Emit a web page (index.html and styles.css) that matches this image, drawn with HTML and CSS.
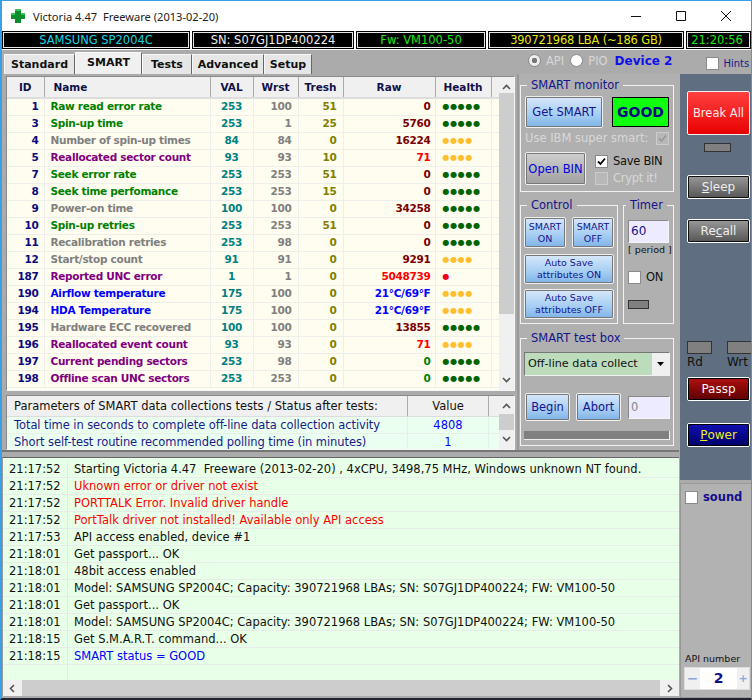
FILE: index.html
```html
<!DOCTYPE html>
<html lang="en">
<head>
<meta charset="utf-8">
<title>Victoria 4.47</title>
<link rel="stylesheet" href="styles.css">
</head>
<body>
<div class="window">
  <header class="titlebar">
    <svg class="appicon" width="16" height="16" viewBox="0 0 16 16"><path d="M5 1h6v4h4v6h-4v4H5v-4H1V5h4z" fill="#0b8f2c"/><path d="M5 1h6v2H5zM1 5h4v2H1zM11 5h4v2h-4z" fill="#35c552"/></svg>
    <span class="title-text">Victoria 4.47  Freeware (2013-02-20)</span>
    <div class="winctl">
      <svg width="12" height="12" viewBox="0 0 12 12"><path d="M1 6.5h10" stroke="#111" fill="none"/></svg>
      <svg width="12" height="12" viewBox="0 0 12 12"><path d="M1.5 1.5h9v9h-9z" stroke="#111" fill="none"/></svg>
      <svg width="12" height="12" viewBox="0 0 12 12"><path d="M1 1l10 10M11 1L1 11" stroke="#111" fill="none"/></svg>
    </div>
  </header>

  <div class="infobar">
    <div class="info cyan i-model">SAMSUNG SP2004C</div>
    <div class="info white i-sn">SN: S07GJ1DP400224</div>
    <div class="info green i-fw">Fw: VM100-50</div>
    <div class="info yellow i-lba">390721968 LBA (~186 GB)</div>
    <div class="info green i-time">21:20:56</div>
  </div>

  <div class="toolbar">
    <nav class="tabs">
      <span class="tab t-standard">Standard</span>
      <span class="tab active t-smart">SMART</span>
      <span class="tab t-tests">Tests</span>
      <span class="tab t-adv">Advanced</span>
      <span class="tab t-setup">Setup</span>
    </nav>
    <div class="modes">
      <span class="radio on"></span><span class="ghost mode-l">API</span>
      <span class="radio"></span><span class="ghost mode-l">PIO</span>
      <span class="device">Device 2</span>
    </div>
    <div class="hints"><span class="check"></span><span>Hints</span></div>
  </div>

  <div class="body">
    <div class="leftcol">
      <div class="upper">
        <div class="tables">
          <section class="smart-panel">
            <div class="smart-table">
              <table class="attrs">
                <colgroup><col class="c-id"><col class="c-name"><col class="c-val"><col class="c-wrst"><col class="c-tresh"><col class="c-raw"><col class="c-health"><col class="c-end"></colgroup>
                <thead><tr><th class="r">ID</th><th class="l nm">Name</th><th>VAL</th><th>Wrst</th><th>Tresh</th><th>Raw</th><th>Health</th><th></th></tr></thead>
                <tbody>
                  <tr><td class="id">1</td><td class="name g">Raw read error rate</td><td class="val">253</td><td class="wrst">100</td><td class="tresh">51</td><td class="raw">0</td><td class="h"><span class="dg">●●●●●</span></td><td></td></tr>
                  <tr><td class="id">3</td><td class="name g">Spin-up time</td><td class="val">253</td><td class="wrst">1</td><td class="tresh">25</td><td class="raw">5760</td><td class="h"><span class="dg">●●●●●</span></td><td></td></tr>
                  <tr><td class="id">4</td><td class="name n">Number of spin-up times</td><td class="val">84</td><td class="wrst">84</td><td class="tresh">0</td><td class="raw">16224</td><td class="h"><span class="dy">●●●●</span></td><td></td></tr>
                  <tr><td class="id">5</td><td class="name p">Reallocated sector count</td><td class="val">93</td><td class="wrst">93</td><td class="tresh">10</td><td class="raw hot">71</td><td class="h"><span class="dy">●●●●</span></td><td></td></tr>
                  <tr><td class="id">7</td><td class="name g">Seek error rate</td><td class="val">253</td><td class="wrst">253</td><td class="tresh">51</td><td class="raw">0</td><td class="h"><span class="dg">●●●●●</span></td><td></td></tr>
                  <tr><td class="id">8</td><td class="name g">Seek time perfomance</td><td class="val">253</td><td class="wrst">253</td><td class="tresh">15</td><td class="raw">0</td><td class="h"><span class="dg">●●●●●</span></td><td></td></tr>
                  <tr><td class="id">9</td><td class="name n">Power-on time</td><td class="val">100</td><td class="wrst">100</td><td class="tresh">0</td><td class="raw">34258</td><td class="h"><span class="dg">●●●●●</span></td><td></td></tr>
                  <tr><td class="id">10</td><td class="name g">Spin-up retries</td><td class="val">253</td><td class="wrst">253</td><td class="tresh">51</td><td class="raw">0</td><td class="h"><span class="dg">●●●●●</span></td><td></td></tr>
                  <tr><td class="id">11</td><td class="name n">Recalibration retries</td><td class="val">253</td><td class="wrst">98</td><td class="tresh">0</td><td class="raw">0</td><td class="h"><span class="dg">●●●●●</span></td><td></td></tr>
                  <tr><td class="id">12</td><td class="name n">Start/stop count</td><td class="val">91</td><td class="wrst">91</td><td class="tresh">0</td><td class="raw">9291</td><td class="h"><span class="dy">●●●●</span></td><td></td></tr>
                  <tr><td class="id">187</td><td class="name p">Reported UNC error</td><td class="val">1</td><td class="wrst">1</td><td class="tresh">0</td><td class="raw hot">5048739</td><td class="h"><span class="dr">●</span></td><td></td></tr>
                  <tr><td class="id">190</td><td class="name b">Airflow temperature</td><td class="val">175</td><td class="wrst">100</td><td class="tresh">0</td><td class="raw cool">21°C/69°F</td><td class="h"><span class="dy">●●●●</span></td><td></td></tr>
                  <tr><td class="id">194</td><td class="name b">HDA Temperature</td><td class="val">175</td><td class="wrst">100</td><td class="tresh">0</td><td class="raw cool">21°C/69°F</td><td class="h"><span class="dy">●●●●</span></td><td></td></tr>
                  <tr><td class="id">195</td><td class="name n">Hardware ECC recovered</td><td class="val">100</td><td class="wrst">100</td><td class="tresh">0</td><td class="raw">13855</td><td class="h"><span class="dg">●●●●●</span></td><td></td></tr>
                  <tr><td class="id">196</td><td class="name p">Reallocated event count</td><td class="val">93</td><td class="wrst">93</td><td class="tresh">0</td><td class="raw hot">71</td><td class="h"><span class="dy">●●●●</span></td><td></td></tr>
                  <tr><td class="id">197</td><td class="name p">Current pending sectors</td><td class="val">253</td><td class="wrst">98</td><td class="tresh">0</td><td class="raw grn">0</td><td class="h"><span class="dg">●●●●●</span></td><td></td></tr>
                  <tr><td class="id">198</td><td class="name p">Offline scan UNC sectors</td><td class="val">253</td><td class="wrst">253</td><td class="tresh">0</td><td class="raw grn">0</td><td class="h"><span class="dg">●●●●●</span></td><td></td></tr>
                </tbody>
              </table>
            </div>
            <div class="vscroll s-main">
              <svg class="arrow" width="9" height="6" viewBox="0 0 9 6"><path d="M1 5l3.5-3.5L8 5" stroke="#555" stroke-width="1.6" fill="none"/></svg>
              <div class="track"><div class="thumb"></div></div>
              <svg class="arrow" width="9" height="6" viewBox="0 0 9 6"><path d="M1 1l3.5 3.5L8 1" stroke="#555" stroke-width="1.6" fill="none"/></svg>
            </div>
          </section>
          <section class="params-panel">
            <div class="params-table">
              <div class="p-head"><span class="p-title">Parameters of SMART data collections tests / Status after tests:</span><span class="p-value">Value</span><span class="p-end"></span></div>
              <div class="p-row"><span class="p-title">Total time in seconds to complete off-line data collection activity</span><span class="p-value">4808</span></div>
              <div class="p-row"><span class="p-title">Short self-test routine recommended polling time (in minutes)</span><span class="p-value">1</span></div>
            </div>
            <div class="vscroll s-params">
              <svg class="arrow" width="9" height="6" viewBox="0 0 9 6"><path d="M1 5l3.5-3.5L8 5" stroke="#555" stroke-width="1.6" fill="none"/></svg>
              <div class="track"><div class="thumb"></div></div>
              <svg class="arrow" width="9" height="6" viewBox="0 0 9 6"><path d="M1 1l3.5 3.5L8 1" stroke="#555" stroke-width="1.6" fill="none"/></svg>
            </div>
          </section>
        </div>

        <aside class="controls">
          <fieldset class="group g-monitor">
            <legend>SMART monitor</legend>
            <div class="mon-top">
              <span class="btn blue get">Get SMART</span>
              <span class="good">GOOD</span>
            </div>
            <div class="ibm"><span class="ghost">Use IBM super smart:</span><span class="check dis"><svg width="11" height="11" viewBox="0 0 11 11"><path d="M2 5.5l2.5 2.5L9 2.5" stroke="#999" stroke-width="1.8" fill="none"/></svg></span></div>
            <div class="mon-bottom">
              <span class="btn gray-l openbin">Open BIN</span>
              <div class="checks">
                <label class="chk"><span class="check"><svg width="11" height="11" viewBox="0 0 11 11"><path d="M2 5.5l2.5 2.5L9 2.5" stroke="#000" stroke-width="1.8" fill="none"/></svg></span>Save BIN</label>
                <label class="chk ghost"><span class="check dis"></span>Crypt it!</label>
              </div>
            </div>
          </fieldset>
          <div class="ctl-row">
            <fieldset class="group g-control">
              <legend>Control</legend>
              <div class="two">
                <span class="btn blue small sq">SMART<br>ON</span>
                <span class="btn blue small sq">SMART<br>OFF</span>
              </div>
              <span class="btn blue small wide">Auto Save<br>attributes ON</span>
              <span class="btn blue small wide">Auto Save<br>attributes OFF</span>
            </fieldset>
            <fieldset class="group g-timer">
              <legend>Timer</legend>
              <div class="input timer-in">60</div>
              <div class="period">[ period ]</div>
              <label class="chk on-chk"><span class="check"></span>ON</label>
              <div class="led timer-led"></div>
            </fieldset>
          </div>
          <fieldset class="group g-test">
            <legend>SMART test box</legend>
            <div class="select"><span class="sel-text">Off-line data collect</span><span class="sel-btn"><svg width="7" height="4" viewBox="0 0 7 4"><path d="M0 0h7L3.5 4z" fill="#000"/></svg></span></div>
            <div class="test-row">
              <span class="btn blue begin">Begin</span>
              <span class="btn blue begin">Abort</span>
              <div class="input test-in">0</div>
            </div>
            <div class="progress"></div>
          </fieldset>
        </aside>
      </div>

      <section class="log">
        <div class="log-rows">
          <div class="l-row"><span class="l-t">21:17:52</span><span class="l-m">Starting Victoria 4.47  Freeware (2013-02-20) , 4xCPU, 3498,75 MHz, Windows unknown NT found.</span></div>
          <div class="l-row"><span class="l-t">21:17:52</span><span class="l-m err">Uknown error or driver not exist</span></div>
          <div class="l-row"><span class="l-t">21:17:52</span><span class="l-m err">PORTTALK Error. Invalid driver handle</span></div>
          <div class="l-row"><span class="l-t">21:17:52</span><span class="l-m err">PortTalk driver not installed! Available only API access</span></div>
          <div class="l-row"><span class="l-t">21:17:53</span><span class="l-m">API access enabled, device #1</span></div>
          <div class="l-row"><span class="l-t">21:18:01</span><span class="l-m">Get passport... OK</span></div>
          <div class="l-row"><span class="l-t">21:18:01</span><span class="l-m">48bit access enabled</span></div>
          <div class="l-row"><span class="l-t">21:18:01</span><span class="l-m">Model: SAMSUNG SP2004C; Capacity: 390721968 LBAs; SN: S07GJ1DP400224; FW: VM100-50</span></div>
          <div class="l-row"><span class="l-t">21:18:01</span><span class="l-m">Get passport... OK</span></div>
          <div class="l-row"><span class="l-t">21:18:01</span><span class="l-m">Model: SAMSUNG SP2004C; Capacity: 390721968 LBAs; SN: S07GJ1DP400224; FW: VM100-50</span></div>
          <div class="l-row"><span class="l-t">21:18:15</span><span class="l-m">Get S.M.A.R.T. command... OK</span></div>
          <div class="l-row"><span class="l-t">21:18:15</span><span class="l-m info-l">SMART status = GOOD</span></div>
          <div class="l-row"><span class="l-t"></span><span class="l-m"></span></div>
        </div>
        <div class="hscroll">
          <svg width="6" height="9" viewBox="0 0 6 9"><path d="M5 1L1.5 4.5 5 8" stroke="#555" stroke-width="1.6" fill="none"/></svg>
          <div class="h-track"></div>
          <svg width="6" height="9" viewBox="0 0 6 9"><path d="M1 1l3.5 3.5L1 8" stroke="#555" stroke-width="1.6" fill="none"/></svg>
        </div>
      </section>
    </div>

    <div class="rightcol">
      <div class="slate">
        <span class="btn breakall">Break All</span>
        <div class="led break-led"></div>
        <span class="btn dark sleep"><u>S</u>leep</span>
        <span class="btn dark recall">Re<u>c</u>all</span>
        <div class="rw">
          <div class="rw-item"><div class="led rw-led"></div><span>Rd</span></div>
          <div class="rw-item"><div class="led rw-led"></div><span>Wrt</span></div>
        </div>
        <span class="btn maroon">Passp</span>
        <span class="btn navy"><u>P</u>ower</span>
      </div>
      <div class="soundpanel">
        <label class="sound"><span class="check big"></span>sound</label>
        <div class="api">
          <div class="api-label">API number</div>
          <div class="spinner"><span class="spin-b">−</span><span class="spin-v">2</span><span class="spin-b plus">+</span></div>
        </div>
      </div>
    </div>
  </div>
</div>
</body>
</html>
```

FILE: styles.css
```css
* { box-sizing: border-box; }
html, body { margin: 0; padding: 0; }
body { width: 752px; height: 700px; overflow: hidden; font-family: "DejaVu Sans", sans-serif; font-size: 11px; }
.window { width: 752px; height: 700px; display: flex; flex-direction: column; background: #ababab; border: 1px solid #3aa0e6; border-left-width: 2px; border-bottom: 2px solid #223; overflow: hidden; }

.titlebar { height: 30px; flex: none; background: #fff; display: flex; align-items: center; padding-left: 8px; }
.appicon { margin-right: 7px; }
.title-text { font-family: "Noto Sans", sans-serif; font-size: 11.1px; white-space: pre; color: #222; }
.winctl { margin-left: auto; display: flex; gap: 33px; padding-right: 19px; }

.infobar { height: 19px; flex: none; display: flex; gap: 2px; background: #fff; padding-bottom: 1px; }
.info { background: #000; outline: 1px solid #e8e8e8; outline-offset: -2px; border: 1px solid #000; font-size: 11.5px; text-align: center; line-height: 16px; white-space: nowrap; }
.i-model { width: 188px; } .i-sn { width: 162px; } .i-fw { flex: none; width: 130px; } .i-lba { width: 196px; letter-spacing: -.2px; } .i-time { flex: 1; padding-right: 3px; }
.cyan { color: #19d3e6; } .white { color: #eee; } .green { color: #19e619; } .yellow { color: #e6e619; }

.toolbar { height: 24px; flex: none; display: flex; align-items: flex-end; background: #ababab; }
.tabs { display: flex; align-items: flex-end; padding-left: 2px; width: 510px; flex: none; }
.tab { height: 20px; background: #e6e6e6; border: 1px solid #f8f8f8; border-right-color: #666; border-bottom: 0; font-weight: bold; font-size: 11px; line-height: 19px; color: #111; text-align: center; }
.tab.active { height: 22px; background: #f0f0f0; line-height: 19px; color: #111; }
.t-standard { width: 71px; } .t-smart { width: 67px; } .t-tests { width: 50px; } .t-adv { width: 72px; } .t-setup { width: 48px; }
.modes { display: flex; align-items: center; align-self: flex-start; height: 17px; margin-top: 2px; margin-left: 16px; flex: none; }
.mode-l { font-size: 11.5px; margin: 0 6px 0 5px; }
.radio { width: 13px; height: 13px; border-radius: 50%; background: #fff; border: 1px solid #8a8a8a; position: relative; flex: none; }
.radio.on { background: radial-gradient(circle, #777 0 2.5px, #eee 3px); }
.ghost { color: #d8d8d8; }
.device { color: #1010e8; font-weight: bold; font-size: 12px; margin-left: 1px; white-space: nowrap; }
.hints { display: flex; align-items: center; align-self: flex-start; gap: 4px; margin-top: 7px; margin-left: 34px; color: #1a1a8c; white-space: nowrap; font-size: 10px; flex: none; }

.check { display: inline-flex; align-items: center; justify-content: center; width: 13px; height: 13px; background: #fff; border: 1px solid #8a8a8a; flex: none; }
.check.dis { background: #b8b8b8; border-color: #ccc; }

.body { flex: 1; display: flex; min-height: 0; }
.leftcol { width: 677px; flex: none; display: flex; flex-direction: column; }
.upper { height: 378px; display: flex; border-bottom: 2px solid #777; flex: none; }
.tables { width: 513px; flex: none; padding: 2px 0 0 4px; display: flex; flex-direction: column; gap: 4px; }
.smart-panel { height: 318px; display: flex; background: #fff; border: 1px solid #8a8a8a; border-right-color: #f5f5f5; border-bottom-color: #f5f5f5; }
.smart-table { flex: 1; overflow: hidden; background: #fffdf0; }
.attrs { border-collapse: collapse; table-layout: fixed; width: 100%; font-weight: bold; font-size: 10.5px; letter-spacing: -.3px; }
.c-id { width: 37px; } .c-name { width: 166px; } .c-val { width: 43px; } .c-wrst { width: 45px; } .c-tresh { width: 45px; } .c-raw { width: 92px; } .c-health { width: 56px; } .c-end { width: 8px; }
.attrs th { height: 21px; background: #f0f0f0; color: #10104a; border-right: 1px solid #aaa; border-bottom: 2px solid #ddd; padding: 0; font-size: 10.5px; letter-spacing: 0; }
.attrs th.l { text-align: left; padding-left: 9px; }
.attrs th.r { text-align: center; }
.attrs td { height: 17px; padding: 0 4px 0 0; border-right: 1px solid #eeeeea; border-bottom: 1px solid #eeeeea; text-align: right; white-space: nowrap; overflow: hidden; line-height: 15px; }
.attrs td.id { color: #0a0a80; padding-right: 5px; }
.attrs td.name { text-align: left; padding-left: 6px; }
.attrs td.val { color: #008080; text-align: center; padding: 0; }
.attrs td.wrst { color: #808080; padding-right: 6px; }
.attrs td.tresh { color: #808000; padding-right: 6px; }
.attrs td.raw { color: #7a0000; }
.g { color: #008000; } .n { color: #808080; } .p { color: #800080; } .b { color: #0000ff; }
.attrs td.hot { color: #ff0000; } .attrs td.cool { color: #0000ff; } .attrs td.grn { color: #008000; }
.attrs td.h { text-align: left; padding: 0 0 0 7px; font-size: 8px; letter-spacing: .7px; }
.dg { color: #006400; } .dy { color: #ffbf30; } .dr { color: #ee0020; }

.vscroll { width: 15px; flex: none; background: #f0f0f0; display: flex; flex-direction: column; align-items: center; justify-content: space-between; padding: 7px 0; }
.track { flex: 1; width: 100%; margin: 3px 0; }
.s-main .thumb { height: 221px; background: #cdcdcd; }
.s-params .thumb { height: 16px; margin-top: 2px; background: #cdcdcd; }

.params-panel { height: 55px; display: flex; background: #fff; border: 1px solid #8a8a8a; border-right-color: #f5f5f5; border-bottom-color: #f5f5f5; overflow: hidden; }
.params-table { flex: 1; background: #ebfff0; overflow: hidden; font-size: 11.5px; }
.p-head { height: 21px; display: flex; background: #f0f0f0; line-height: 20px; border-bottom: 1px solid #ddd; color: #111; }
.p-row { height: 17px; display: flex; line-height: 16px; color: #1a1a8c; border-bottom: 1px solid #e8f0e8; }
.p-title { width: 401px; padding-left: 7px; white-space: nowrap; overflow: hidden; border-right: 1px solid #aaa; flex: none; }
.p-row .p-title { border-right-color: #e4f0e4; letter-spacing: -.08px; }
.p-value { width: 81px; text-align: center; border-right: 1px solid #aaa; flex: none; }
.p-row .p-value { color: #0000ff; border-right-color: #e4f0e4; }

.controls { width: 163px; flex: none; margin-left: 2px; padding: 0 6px 0 1px; display: flex; flex-direction: column; background: #b0b0b0; border-left: 2px solid #999; }
.group { margin: 0; padding: 0 4px; border: 1px solid #f2f2f2; border-radius: 0; min-width: 0; background: #b0b0b0; }
.group legend { padding: 0 4px; color: #14148c; font-size: 11.5px; line-height: 14px; white-space: nowrap; }
.g-monitor { height: 114px; margin-top: 4px; padding-top: 4px; }
.g-monitor legend { margin-left: 2px; }
.g-control legend { margin-left: 3px; }
.g-timer legend { margin-left: -2px; }
.g-test legend { margin-left: 3px; }
.mon-top { display: flex; align-items: center; gap: 9px; }
.btn { display: flex; align-items: center; justify-content: center; text-align: center; flex: none; border: 1px solid #f0f0f0; outline: 1px solid #777; outline-offset: -2px; border-radius: 2px; white-space: nowrap; }
.btn.blue { background: linear-gradient(#d8e8fb, #a5cdf2 60%, #7fb3e8); color: #14148c; }
.get { width: 78px; height: 32px; font-size: 11.5px; }
.good { width: 58px; height: 30px; background: #10ff10; border: 1px solid #000; color: #0a0a80; font-weight: bold; font-size: 14px; text-align: center; line-height: 28px; }
.ibm { display: flex; align-items: center; justify-content: space-between; height: 20px; font-size: 11.5px; white-space: nowrap; }
.mon-bottom { display: flex; gap: 9px; margin-top: 4px; }
.openbin { width: 61px; height: 33px; color: #0000e0; font-size: 11.5px; background: linear-gradient(#d0d0d0, #a0a0a0); }
.checks { display: flex; flex-direction: column; gap: 3px; padding-top: 2px; }
.chk { display: flex; align-items: center; gap: 5px; font-size: 11.5px; color: #111; height: 14px; white-space: nowrap; letter-spacing: -.3px; }
.chk.ghost { color: #d8d8d8; }
.ctl-row { display: flex; gap: 5px; margin-top: 6px; }
.g-control { width: 98px; height: 126px; display: flex; flex-direction: column; gap: 5px; padding: 5px 3px 0; }
.two { display: flex; justify-content: space-between; margin-bottom: 1px; }
.small { font-size: 9.5px; line-height: 12px; }
.sq { width: 42px; height: 31px; }
.wide { width: 90px; height: 30px; }
.g-timer { flex: 1; height: 126px; padding: 8px 4px 0; }
.input { background: #ecebff; border: 1px solid #888; border-right-color: #f5f5f5; border-bottom-color: #f5f5f5; padding-left: 2px; }
.timer-in { height: 23px; line-height: 21px; font-size: 12px; color: #14148c; }
.period { font-size: 9.5px; color: #111; text-align: center; margin-top: 1px; white-space: nowrap; line-height: 12px; }
.on-chk { margin-top: 14px; }
.led { background: #808080; border: 1px solid #333; }
.timer-led { width: 21px; height: 9px; margin-top: 16px; }
.g-test { height: 115px; margin-top: 7px; padding: 7px 3px 0; }
.select { height: 24px; display: flex; background: #bcdcbc; border: 1px solid #f0f0f0; border-top-color: #777; border-left-color: #777; color: #111; font-size: 11.2px; line-height: 22px; }
.sel-text { flex: 1; padding-left: 3px; }
.sel-btn { width: 17px; background: #f0f0f0; display: flex; align-items: center; justify-content: center; }
.test-row { display: flex; gap: 6px; align-items: center; margin-top: 17px; padding-left: 1px; }
.begin { width: 45px; height: 28px; font-size: 11.5px; }
.test-in { flex: 1; height: 23px; color: #888; line-height: 21px; margin-left: 1px; font-size: 11.5px; }
.progress { height: 9px; background: #808080; margin-top: 10px; border-bottom: 1px solid #eee; border-right: 1px solid #eee; }

.log { margin: 5px 0 2px; flex: 1; display: flex; flex-direction: column; border-left: 1px solid #999; min-height: 0; border-top: 1px solid #666; }
.log-rows { flex: 1; background: #e8ffe8; overflow: hidden; padding-top: 3px; font-size: 11.5px; }
.l-row { height: 17px; display: flex; line-height: 16px; border-bottom: 1px solid #e8ece8; color: #111; }
.l-t { width: 65px; padding-left: 6px; border-right: 1px solid #e4ece4; flex: none; }
.l-m { padding-left: 6px; white-space: pre; }
.err { color: #ff0000; } .info-l { color: #0000ff; }
.hscroll { height: 16px; flex: none; display: flex; align-items: center; gap: 7px; background: #f0f0f0; padding: 0 6px; }
.h-track { flex: 1; height: 100%; background: #cdcdcd; margin: 1px 0; }

.rightcol { flex: 1; display: flex; flex-direction: column; gap: 3px; margin-left: 1px; overflow: hidden; }
.slate { height: 406px; background: #5f6e80; padding: 17px 0 0 7px; display: flex; flex-direction: column; flex: none; color: #111; }
.breakall { width: 63px; height: 44px; background: linear-gradient(#ff4040, #e80000); color: #f8e8e8; font-size: 11.5px; outline: 0; }
.break-led { width: 27px; height: 9px; margin: 8px 0 0 17px; }
.dark { width: 63px; height: 24px; background: linear-gradient(#999, #555); border-color: #fff; outline: 1px solid #111; outline-offset: -2px; color: #eee; font-size: 12px; }
.sleep { margin-top: 23px; }
.recall { margin-top: 20px; }
.rw { display: flex; gap: 15px; margin-top: 98px; width: 90px; }
.rw-item { width: 25px; font-size: 12px; flex: none; line-height: 17px; }
.rw-led { width: 25px; height: 13px; }
.maroon { width: 63px; height: 24px; margin-top: 6px; background: linear-gradient(#b01010, #5c0000); color: #f4f4f4; font-size: 12px; border-color: #fff; outline: 1px solid #000; outline-offset: -2px; }
.navy { width: 63px; height: 24px; margin-top: 22px; background: linear-gradient(#1010b0, #00006a); color: #eeee20; font-size: 12px; border-color: #fff; outline: 1px solid #000; outline-offset: -2px; }
.soundpanel { flex: 1; background: #b2b2b2; padding: 0 0 7px 3px; display: flex; flex-direction: column; justify-content: space-between; border: 1px solid #999; border-right: 0; }
.sound { display: flex; align-items: center; gap: 5px; margin: 6px 0 0 1px; font-weight: bold; font-size: 11.5px; color: #10108c; }
.api-label { font-size: 9.5px; color: #111; margin: 0 0 3px 1px; white-space: nowrap; }
.spinner { display: flex; height: 23px; background: #fff; border: 1px solid #ddd; width: 66px; overflow: hidden; }
.spin-b { width: 15px; background: #f0f0f0; color: #88a8d8; font-weight: bold; font-size: 14px; text-align: center; line-height: 21px; flex: none; }
.spin-b.plus { width: 12px; font-size: 11px; }
.spin-v { width: 37px; text-align: center; color: #10108c; font-weight: bold; font-size: 14px; line-height: 21px; flex: none; }
```
